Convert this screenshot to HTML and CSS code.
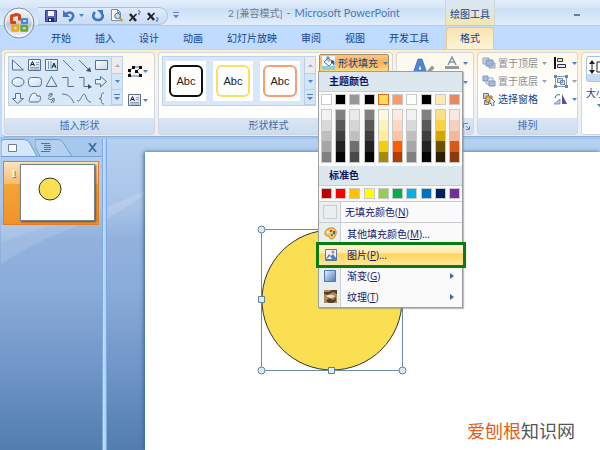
FILE: index.html
```html
<!DOCTYPE html>
<html lang="zh-CN">
<head>
<meta charset="utf-8">
<title>2 [兼容模式] - Microsoft PowerPoint</title>
<link rel="stylesheet" href="styles.css">
</head>
<body>
<svg class="defs" aria-hidden="true">
  <defs>
    <linearGradient id="orb" x1="0" y1="0" x2="0" y2="1"><stop offset="0" stop-color="#fdfdfe"/><stop offset=".45" stop-color="#d3d9e4"/><stop offset=".55" stop-color="#bcc5d5"/><stop offset="1" stop-color="#f8faff"/></linearGradient>
    <linearGradient id="glass" x1="0" y1="0" x2="1" y2="1"><stop offset="0" stop-color="#fff"/><stop offset="1" stop-color="#c5d9f0"/></linearGradient>
    <linearGradient id="blue" x1="0" y1="0" x2="1" y2="1"><stop offset="0" stop-color="#e8f3ff"/><stop offset="1" stop-color="#4a7bbb"/></linearGradient>
    <symbol id="caret" viewBox="0 0 5 3"><path d="M0 0h5L2.500 3z"/></symbol>
    <symbol id="more" viewBox="0 0 6 6"><path d="M0 0h6v1H0zM0 3h6L3 6z"/></symbol>
    <symbol id="textbox" viewBox="0 0 13 12"><path d="M.5.5h12v11H.5z" fill="url(#glass)" stroke="#5d7186"/><path d="M2.500 7 4.500 2.500 6.500 7M3 5.500h3" fill="none" stroke="#222"/><path d="M8 3.500h3M8 5.500h3M2 8.500h9M2 10h9" stroke="#7793b3" stroke-width=".8"/></symbol>
  </defs>
</svg>

<header class="chrome">
  <button class="office" aria-label="Office 按钮">
    <svg viewBox="0 0 32 32"><circle cx="16" cy="16" r="15" fill="url(#orb)" stroke="#7d8ca5"/><circle cx="16" cy="16" r="13.500" fill="none" stroke="#fff" opacity=".7"/>
      <g fill="none" stroke-linejoin="round"><path d="M13 15.500H8.500V9l5-1.500 3 1v5" stroke="#db4312" stroke-width="3"/><path d="M19 12h5v4h-5z" stroke="#3b91d3" stroke-width="2.200"/><path d="M9.500 18.500h5.500v5H9.500z" stroke="#f0a51c" stroke-width="2.600"/><path d="M18.500 19h5.500v4.500h-5.500z" stroke="#65a833" stroke-width="2.400"/></g></svg>
  </button>
  <div class="titlebar">
    <div class="qat">
      <button aria-label="保存"><svg width="12" height="12" viewBox="0 0 12 12"><path d="M.5.5h11v11H.5z" fill="#5f63c4" stroke="#33388d"/><path d="M3 1h6v5H3z" fill="#eef4ff"/><path d="M3 8h6v4H3z" fill="#222a5c"/><path d="M4 9h2v2H4z" fill="#fff"/></svg></button>
      <button aria-label="撤销"><svg width="12" height="12" viewBox="0 0 12 12"><path d="M3 4c4-3 8-1 7 3-.5 2-2 3-4 4" fill="none" stroke="#4276c5" stroke-width="2.600"/><path d="M0 0v7h7z" fill="#4276c5"/></svg></button>
      <button class="undo-list" aria-label="撤销列表"><svg class="caret"><use href="#caret"/></svg></button>
      <button aria-label="重复"><svg width="12" height="12" viewBox="0 0 12 12"><path d="M3 2c-3 3-2 8 3 8s6-5 3-7" fill="none" stroke="#4276c5" stroke-width="2.600"/><path d="M5 0h6v6z" fill="#4276c5"/></svg></button>
      <button aria-label="打印预览"><svg width="13" height="13" viewBox="0 0 13 13"><path d="M1.500.5h6l3 3v8h-9z" fill="#fff" stroke="#7890ad"/><path d="M7.500.5v3h3" fill="none" stroke="#7890ad"/><circle cx="7.500" cy="7" r="2.800" fill="#bfe0f5" stroke="#66727e"/><path d="m9.500 9 3 3" stroke="#d9962f" stroke-width="2"/></svg></button>
      <button aria-label="上标"><svg width="12" height="12" viewBox="0 0 12 12"><path d="m1 4 6 7" stroke="#222" stroke-width="2.500"/><path d="m7.500 4-7 7" stroke="#222" stroke-width="1.600"/><path d="M9 1h2v1.500L9 4h2" fill="none" stroke="#3e73bd"/></svg></button>
      <button aria-label="下标"><svg width="12" height="12" viewBox="0 0 12 12"><path d="m1 3 6 7" stroke="#222" stroke-width="2.500"/><path d="m7.500 3-7 7" stroke="#222" stroke-width="1.600"/><path d="M9 8h2v1.500L9 11h2" fill="none" stroke="#3e73bd"/></svg></button>
    </div>
    <button class="customize" aria-label="自定义快速访问工具栏"><svg class="more"><use href="#more"/></svg></button>
    <h1 class="title"><span class="doc">2 [兼容模式]</span><span>-</span><span>Microsoft PowerPoint</span></h1>
    <div class="context">绘图工具</div>
    <button class="minimize" aria-label="最小化"><span></span></button>
  </div>
  <nav class="tabs">
    <button>开始</button><button>插入</button><button>设计</button><button>动画</button><button>幻灯片放映</button><button>审阅</button><button>视图</button><button>开发工具</button><button class="active">格式</button>
  </nav>
</header>

<section class="ribbon">
  <div class="group shapes">
    <div class="content">
      <div class="gallery">
        <svg class="shape-grid" width="102" height="49" viewBox="0 0 102 49" fill="url(#glass)" stroke="#55718f" stroke-width="1">
          <path d="M3.500 3v10h11z"/>
          <use href="#textbox" x="19" y="2" width="13" height="12"/>
          <g><path d="M36.500 2.500h12v11h-12z"/><path d="M39.500 4v8M42 4v8" stroke="#7793b3"/><path d="m43 11 2-5 2 5M43.500 9h3" stroke="#222" fill="none"/></g>
          <path d="m54 3 11 11M70 3l10 10" fill="none"/><path d="M82 15l-5-1 4-4z" fill="#35506f" stroke="none"/>
          <path d="M86.500 3.500h12v9h-12z"/>
          <ellipse cx="9" cy="25" rx="6" ry="4.500"/><rect x="19.500" y="20.500" width="13" height="9" rx="3"/><path d="m42.500 19.500 5.500 10H37z"/>
          <path d="M53 20.500h6v9h6M70 20.500h5v9h5" fill="none"/><path d="m79 27 4 3-4 2z" fill="#35506f" stroke="none"/>
          <path d="M86.500 22.500h5v-3l6 5-6 5.500v-3h-5z"/>
          <path d="M6.500 36.500h5v5h3l-6 5-5-5h3z"/><path d="M22 38c2-3 6-2 6 1h3c2 3-1 7-4 6h-6c-2-2 0-4 1-7z"/>
          <path d="M40 37c5-2 4 2 1 3s-1 4 2 2 3 1 1 4M39 39l4-2M45 41l-3 5" fill="none"/>
          <path d="M53 37c6 0 9 3 12 9M68 43c3 4 5-6 7-6s2 8 7 8" fill="none"/><path d="M95 36c-4 0-2 4-3 5l-2 .5 2 .5c1 1-1 5 3 5" fill="none"/>
        </svg>
        <div class="scroller"><button class="off" aria-label="上一行"><svg class="caret up"><use href="#caret"/></svg></button><button aria-label="下一行"><svg class="caret"><use href="#caret"/></svg></button><button aria-label="更多形状"><svg class="more"><use href="#more"/></svg></button></div>
      </div>
      <div class="shape-tools">
        <button aria-label="编辑形状"><svg width="15" height="13" viewBox="0 0 15 13"><path d="M2 11V5l4-3h7L9 6l4 5z" fill="#fff" stroke="#4f6f95"/><path d="M0 9h3v3H0zM0 4h3v3H0zM4 1h3v3H4zM11 1h3v3h-3zM7 5h3v3H7zM11 9h3v3h-3z" fill="#111"/></svg><svg class="caret"><use href="#caret"/></svg></button>
        <button aria-label="文本框"><svg width="13" height="12"><use href="#textbox"/></svg><svg class="caret"><use href="#caret"/></svg></button>
      </div>
    </div>
    <h2>插入形状</h2>
  </div>

  <div class="group styles">
    <div class="content">
      <div class="gallery">
        <div class="cards"><button class="card"><span class="black">Abc</span></button><button class="card"><span class="yellow">Abc</span></button><button class="card"><span class="orange">Abc</span></button></div>
        <div class="scroller"><button class="off" aria-label="上一行"><svg class="caret up"><use href="#caret"/></svg></button><button aria-label="下一行"><svg class="caret"><use href="#caret"/></svg></button><button aria-label="更多样式"><svg class="more"><use href="#more"/></svg></button></div>
      </div>
      <div class="fill">
        <button class="fill-button" aria-expanded="true"><svg width="16" height="15" viewBox="0 0 16 15"><path d="M1 10h13v4H1z" fill="#8bd0d2"/><path d="M1 0h13v10H1z" fill="#eef5fb"/><path d="m3 6 4-4 5 4-4 4z" fill="#fff" stroke="#607e9f"/><path d="M6 5V1h2v5" fill="none" stroke="#607e9f"/><path d="M10 4c4 0 4 3 3 6-1-2-1-3-3-3z" fill="#315b95"/></svg>形状填充<svg class="caret"><use href="#caret"/></svg></button>
        <div class="menu">
          <h3>主题颜色</h3>
          <div class="swatches base">
            <button class="white" aria-label="白色"></button><button class="k" aria-label="黑色"></button><button class="gray" aria-label="灰色"></button><button class="k" aria-label="黑色 2"></button><button class="gold selected" aria-label="金黄"></button><button class="salmon" aria-label="橙红"></button><button class="white" aria-label="白色 2"></button><button class="k" aria-label="黑色 3"></button><button class="cream" aria-label="浅黄"></button><button class="clay" aria-label="赭色"></button>
          </div>
          <div class="swatches shades">
            <button class="s-white" aria-label="白色深浅"></button><button class="s-black" aria-label="黑色深浅"></button><button class="s-gray" aria-label="灰色深浅"></button><button class="s-black" aria-label="黑色 2 深浅"></button><button class="s-gold" aria-label="金黄深浅"></button><button class="s-salmon" aria-label="橙红深浅"></button><button class="s-white" aria-label="白色 2 深浅"></button><button class="s-black" aria-label="黑色 3 深浅"></button><button class="s-cream" aria-label="浅黄深浅"></button><button class="s-clay" aria-label="赭色深浅"></button>
          </div>
          <h3>标准色</h3>
          <div class="swatches standard">
            <button class="darkred" aria-label="深红"></button><button class="red" aria-label="红色"></button><button class="amber" aria-label="橙色"></button><button class="pure-yellow" aria-label="黄色"></button><button class="lime" aria-label="浅绿"></button><button class="green" aria-label="绿色"></button><button class="sky" aria-label="浅蓝"></button><button class="mid-blue" aria-label="蓝色"></button><button class="navy" aria-label="深蓝"></button><button class="purple" aria-label="紫色"></button>
          </div>
          <div class="items">
            <button class="item none"><span class="icon"><span class="empty"></span></span><span>无填充颜色(<u>N</u>)</span></button>
            <button class="item"><span class="icon"><svg width="13" height="13" viewBox="0 0 13 13"><path d="M6 1c4-1 7 2 6 6s-3 5-5 5-1-3-3-3-3 0-3-3 2-4 5-5z" fill="#f3c565" stroke="#c78b2c"/><circle cx="4" cy="5" r="1.200" fill="#fff"/><path d="M6 3h2v2H6z" fill="#d23b25"/><path d="M9 4h2v3H9z" fill="#365fbd"/><path d="M7 7h2v2H7z" fill="#2e9d37"/></svg></span><span>其他填充颜色(<u>M</u>)...</span></button>
            <button class="item hot"><span class="icon"><svg width="12" height="12" viewBox="0 0 12 12"><path d="M.5.5h11v11H.5z" fill="#e9f3ff" stroke="#5a78a5"/><path d="m1 10 3-5 2 2 2-2 3 4v2H1z" fill="#577db5"/><path d="m2 10 3-3 2 3z" fill="#fff"/><circle cx="8" cy="3" r="1.500" fill="#e57a44"/></svg></span><span>图片(<u>P</u>)...</span></button>
            <button class="item"><span class="icon"><svg width="12" height="12" viewBox="0 0 12 12"><path d="M.5.5h11v11H.5z" fill="url(#blue)" stroke="#5379aa"/></svg></span><span>渐变(<u>G</u>)</span><svg class="sub" width="4" height="6" viewBox="0 0 4 6"><path d="M0 0v6l4-3z"/></svg></button>
            <button class="item"><span class="icon"><svg width="13" height="13" viewBox="0 0 13 13"><path d="M0 0h13v13H0z" fill="#a98b5f"/><path d="M0 2h5l3-2h5v4L9 2 4 5 0 4zM2 11l3-3 4 2 3-3v4l-3 2H5z" fill="#51402c"/><path d="M2 6c3-2 6-1 9 0-3 3-6 2-9 0z" fill="#efdeb0"/></svg></span><span>纹理(<u>T</u>)</span><svg class="sub" width="4" height="6" viewBox="0 0 4 6"><path d="M0 0v6l4-3z"/></svg></button>
          </div>
        </div>
      </div>
    </div>
    <h2 class="with-launcher">形状样式</h2>
  </div>

  <div class="group wordart">
    <div class="content">
      <button class="quick" aria-label="快速样式"><svg width="26" height="26" viewBox="0 0 26 26"><path d="M1 23 8 3h4l7 20h-4l-2-6H7l-2 6zM8 14h4L10 8z" fill="#4b88d4" stroke="#28599c" stroke-width=".6"/><path d="m14 19 8-9 2 2-8 9z" fill="#9b9b9b" stroke="#666" stroke-width=".5"/></svg></button>
      <div class="stack">
        <button aria-label="文本填充"><svg width="14" height="14" viewBox="0 0 14 14"><path d="M3 9 7 1l4 8M4 6h6" fill="none" stroke="#7d93b0" stroke-width="1.500"/><path d="M0 10h14v3H0z" fill="#999"/></svg><svg class="caret"><use href="#caret"/></svg></button>
        <button aria-label="文本轮廓"><svg width="14" height="14" viewBox="0 0 14 14"><path d="M3 9 7 1l4 8M4 6h6" fill="none" stroke="#7d93b0"/></svg><svg class="caret"><use href="#caret"/></svg></button>
      </div>
    </div>
    <h2><button class="launcher" aria-label="设置文本效果格式"><svg width="7" height="7" viewBox="0 0 7 7"><path d="M.5 5V.5H5M3 3l3 3M6.500 3v3.500H3" fill="none" stroke="#5f87b9"/></svg></button></h2>
  </div>

  <div class="group arrange">
    <div class="content">
      <button disabled><svg width="14" height="12" viewBox="0 0 14 12"><path d="M1 1h6v6H1zM7 6h6v5H7z" fill="#cbd9ea" stroke="#8ba2bf"/><path d="M4 3h7v6H4z" fill="#9cb7d8" stroke="#7e98b8"/></svg>置于顶层<svg class="caret"><use href="#caret"/></svg></button>
      <button aria-label="对齐"><svg width="14" height="12" viewBox="0 0 14 12"><path d="M1 0v12" stroke="#111" stroke-width="2"/><path d="M3.500 1.500h5v3h-5zM3.500 7.500h8v3h-8z" fill="#dceafa" stroke="#333"/></svg><svg class="caret"><use href="#caret"/></svg></button>
      <button disabled><svg width="14" height="12" viewBox="0 0 14 12"><path d="M4 3h7v6H4z" fill="#e2eaf4" stroke="#9db1c9"/><path d="M1 1h5v5H1zM7 6h6v5H7z" fill="#a5bddb" stroke="#7e98b8"/></svg>置于底层<svg class="caret"><use href="#caret"/></svg></button>
      <button disabled aria-label="组合"><svg width="14" height="13" viewBox="0 0 14 13"><path d="M1.500 1.500h11v10h-11z" fill="none" stroke="#8299b4"/><path d="M3.500 3.500h5v4h-5zM6.500 5.500h4v4h-4z" fill="#dbe6f3" stroke="#6d87a8"/><path d="M0 0h3v3H0zM11 0h3v3h-3zM0 10h3v3H0zM11 10h3v3h-3z" fill="#6d87a8"/></svg><svg class="caret"><use href="#caret"/></svg></button>
      <button><svg width="14" height="13" viewBox="0 0 14 13"><path d="M1.500.5h5v5h-5zM2.500 7.500h4v4h-4z" fill="#ccd4dd" stroke="#6b7683"/><path d="M4 3h6v6H4z" fill="#f0bd4f" stroke="#9b7432"/><path d="m8 4 5 5-2 .500 1 3-2 .500-1-3-1 1z" fill="#fff" stroke="#445f83" stroke-width=".8"/></svg>选择窗格</button>
      <button aria-label="旋转"><svg width="14" height="12" viewBox="0 0 14 12"><path d="M8 1v10h5z" fill="#5f4ba5"/><path d="M6 6v5H0z" fill="#b9c9dc" stroke="#68819e" stroke-width=".7"/><path d="M1 5c1-3 3-4 5-3" fill="none" stroke="#444"/></svg><svg class="caret"><use href="#caret"/></svg></button>
    </div>
    <h2>排列</h2>
  </div>

  <div class="group size">
    <div class="content">
      <button><span class="size-icon"><svg width="20" height="16" viewBox="0 0 20 16"><path d="M4 3v10M9 3h9v10H9z" fill="#fff" stroke="#222"/><path d="M1 5l3-4 3 4zM1 11l3 4 3-4z" fill="#222"/></svg></span><span>大小</span><svg class="caret"><use href="#caret"/></svg></button>
    </div>
  </div>
</section>

<main class="workspace">
  <aside class="outline">
    <div class="pane-tabs">
      <button class="pane-tab current" aria-label="幻灯片"><svg width="36" height="18" viewBox="0 0 36 18"><path d="M0 17.500V3Q0 .5 3 .5h20q4 0 6 4l7 13z" fill="#d6e7fa" stroke="#6f9dd1"/><path d="M7.500 5.500h8v7h-8z" fill="#fff" stroke="#6e7c8c"/></svg></button>
      <button class="pane-tab" aria-label="大纲"><svg width="38" height="18" viewBox="0 0 38 18"><path d="M0 .5h23q3 0 5 3l9 14H5L0 8z" fill="#b3d0f0" stroke="#6f9dd1"/><path d="M6 4.500h9M9 6.500h7M9 8.500h7M9 10.500h7M6 12.500h9" stroke="#666d77"/></svg></button>
      <button class="close" aria-label="关闭"><svg width="9" height="9" viewBox="0 0 9 9"><path d="m1 0 7 9M8 0 1 9" stroke="#3d6e9f" stroke-width="1.800"/></svg></button>
    </div>
    <button class="thumb"><span class="number">1</span><span class="preview"><svg width="24" height="24" viewBox="0 0 24 24"><circle cx="12" cy="12" r="11" fill="#fbdf52" stroke="#333"/></svg></span></button>
    <svg class="swoosh" viewBox="0 0 100 50" preserveAspectRatio="none"><path d="M0 20Q30 6 52 0h26Q30 20 0 44z" fill="#fff" opacity=".12"/><path d="M0 0h52Q30 6 0 20z" fill="#fff" opacity=".2"/></svg>
  </aside>
  <div class="splitter"></div>
  <section class="stage">
    <svg class="ray" viewBox="0 0 38 30" preserveAspectRatio="none"><path d="M0 16 38 0v4L0 28z" fill="#fff" opacity=".14"/></svg>
    <div class="slide">
      <svg class="drawing" width="150" height="150" viewBox="0 0 150 150"><circle cx="75" cy="75" r="70" fill="#fbdf52" stroke="#333"/><path d="M4.500 4.500h141v141H4.500z" fill="none" stroke="#668bad"/><g fill="#d9f0f5" stroke="#62809b"><circle cx="4.500" cy="4.500" r="3.500"/><circle cx="145.500" cy="4.500" r="3.500"/><circle cx="4.500" cy="145.500" r="3.500"/><circle cx="145.500" cy="145.500" r="3.500"/><path d="M1.500 71.500h6v6h-6zM71.500 142.500h6v6h-6z"/></g></svg>
      <p class="site"><span>爱刨根</span>知识网</p>
    </div>
  </section>
</main>
</body>
</html>
```
FILE: styles.css
```css
* { box-sizing: border-box; }
body {
  margin: 0;
  min-height: 100vh;
  display: flex;
  flex-direction: column;
  overflow: hidden;
  background: #bfdbff;
  color: #15428b;
  font: 10px/14px "Open Sans", "Noto Sans CJK SC", sans-serif;
}
button {
  margin: 0;
  padding: 0;
  border: 0;
  background: none;
  color: inherit;
  font: inherit;
  white-space: nowrap;
}
svg { display: block; flex: none; }
h1, h2, h3, p { margin: 0; font-weight: 400; }
.defs { position: absolute; width: 0; height: 0; }
.caret { width: 5px; height: 3px; fill: #4f81bd; }
.caret.up { transform: rotate(180deg); }
.more { width: 6px; height: 6px; fill: #4f81bd; }

.chrome { position: relative; }
.office { position: absolute; left: 3px; top: 7px; width: 32px; height: 32px; }
.titlebar {
  display: grid;
  grid-template-columns: 130px 60px 217px 50px 1fr;
  align-items: center;
  height: 26px;
  padding-left: 38px;
  background: linear-gradient(#e3eefb 0, #d6e6f9 30%, #cbdff7 35%, #e0edfc 100%);
  border-bottom: 1px solid #b2cdf0;
}
.qat {
  display: flex;
  align-items: center;
  gap: 6px;
  height: 18px;
  margin-top: 6px;
  padding-left: 7px;
  border: 1px solid #a9c2e2;
  border-left: 0;
  border-radius: 0 9px 9px 0;
  background: linear-gradient(#dfebfa, #c8dcf4);
}
.undo-list { margin: 0 2px 0 -2px; }
.customize { padding: 5px; margin-top: 4px; }
.title { display: flex; gap: 4px; font: 11px/16px Lato, "Noto Sans CJK SC", sans-serif; color: #4a7ab5; white-space: nowrap; }
.doc { color: #737b87; font-size: 10px; }
.context {
  align-self: stretch;
  padding-top: 7px;
  text-align: center;
  border: solid #cfd5cf;
  border-width: 0 1px;
  background: linear-gradient(#d9e7f6, #e0e6df 50%, #f5e7a8);
}
.minimize { justify-self: start; padding: 9px; margin: 4px 0 0 70px; }
.minimize span { display: block; width: 6px; height: 2px; background: #6c7b8e; }
.tabs { display: flex; height: 23px; padding-left: 39px; }
.tabs button { padding: 0 12px; }
.tabs .active {
  margin: 1px 0 0 5px;
  padding: 0 13px 2px;
  border: 1px solid #e0c98d;
  border-bottom: 0;
  border-radius: 3px 3px 0 0;
  background: linear-gradient(#fbe3ae, #fef3d9);
}

.ribbon {
  position: relative;
  z-index: 2;
  display: flex;
  gap: 3px;
  height: 88px;
  margin-left: 2px;
  padding: 2px 0 1px 2px;
  border: solid #d8cfae;
  border-width: 1px 0 1px 0;
  border-bottom-color: #8fb0da;
  border-radius: 4px 0 0 4px;
  background: linear-gradient(#fdeecb, #fbf6e9 30%, #e8eef6);
}
.group {
  display: flex;
  flex-direction: column;
  flex: none;
  border: 1px solid #d2d7dd;
  border-radius: 3px;
  background: linear-gradient(#fdf8ec, #fff 50%);
}
.group .content { flex: 1; display: flex; padding: 3px; }
.group h2 {
  height: 16px;
  font-size: 10px;
  line-height: 15px;
  text-align: center;
  color: #3e6aaa;
  background: linear-gradient(#dbe6f5, #cddcf0);
}
.group .with-launcher { padding-right: 14px; }
.shapes { width: 151px; }
.styles { width: 235px; }
.wordart { width: 78px; }
.arrange { width: 101px; }
.size { flex: 1 0 40px; }
.gallery { display: flex; height: 50px; border: 1px solid #bdd3ec; background: #d8e8f8; }
.scroller { display: grid; grid-template-rows: 17px 16px 15px; width: 11px; }
.scroller button { display: grid; place-items: center; border: 1px solid #b7cfea; border-width: 0 0 1px 1px; background: #d5e5f8; }
.scroller .off { background: #ececec; }
.scroller .off .caret { fill: #a9adb3; }
.shape-tools { display: grid; align-content: space-between; padding: 9px 0 0 5px; height: 50px; }
.shape-tools button { display: flex; align-items: center; justify-content: space-between; width: 20px; }
.cards { display: flex; gap: 7px; padding: 4px 4px 4px 3px; }
.card { width: 40px; height: 40px; padding: 4px 3px; background: #fff; }
.card span { display: grid; place-items: center; height: 32px; border: 2px solid; border-radius: 6px; }
.card { font-family: "Liberation Sans", sans-serif; font-size: 11px; color: #222; }
.card .black { border-color: #111; }
.card .yellow { border-color: #fbdf62; }
.card .orange { border-color: #fb9d72; }
.shapes .gallery { width: 115px; }

.fill { position: relative; margin: -2px 0 0 3px; }
.fill-button {
  display: flex;
  align-items: center;
  gap: 1px;
  width: 70px;
  height: 18px;
  padding-left: 1px;
  border: 1px solid #a98b5c;
  border-radius: 2px;
  background: linear-gradient(#f7c98b, #fbb054 45%, #fdd98a);
}
.fill-button .caret { margin-left: 4px; }
.menu {
  position: absolute;
  top: 17px;
  left: -1px;
  width: 145px;
  border: 1px solid #9b9fa5;
  background: #fafafa;
  box-shadow: 1px 1px 1px #8888;
  color: #101a70;
}
.menu h3 {
  height: 20px;
  padding-left: 10px;
  border-bottom: 1px solid #c8ccd1;
  background: #dde7ee;
  font-size: 10px;
  line-height: 19px;
  font-weight: 700;
  color: #0a1268;
}
.swatches { display: flex; justify-content: space-between; padding: 2px 2px 4px; }
.swatches button { width: 11px; height: 11px; border: 1px solid #c9c9c9; }
.swatches .selected { border-color: #f06020; }
.shades { padding: 0 2px 3px; }
.shades button { height: 54px; }
.standard { padding-bottom: 2px; }
.white { background: #fff; }
.k { background: #000; }
.gray { background: #969696; }
.gold { background: #fbdf52; }
.salmon { background: #ff9966; }
.cream { background: #fdeab0; }
.clay { background: #e68a5c; }
.darkred { background: #c00000; }
.red { background: #f00; }
.amber { background: #ffc000; }
.pure-yellow { background: #ff0; }
.lime { background: #92d050; }
.green { background: #00b050; }
.sky { background: #00b0f0; }
.mid-blue { background: #0070c0; }
.navy { background: #002060; }
.purple { background: #7030a0; }
.s-white { background: linear-gradient(#f2f2f2 20%, #d9d9d9 20% 40%, #bfbfbf 40% 60%, #a6a6a6 60% 80%, #808080 80%); }
.s-black { background: linear-gradient(#808080 20%, #595959 20% 40%, #3f3f3f 40% 60%, #222 60% 80%, #060606 80%); }
.s-gray { background: linear-gradient(#eaeaea 20%, #d5d5d5 20% 40%, #c0c0c0 40% 60%, #707070 60% 80%, #4a4a4a 80%); }
.s-gold { background: linear-gradient(#fef9dc 20%, #fdf2ba 20% 40%, #fdec98 40% 60%, #f4cf05 60% 80%, #a68c02 80%); }
.s-salmon { background: linear-gradient(#ffeae0 20%, #ffd6c2 20% 40%, #ffc2a3 40% 60%, #ff5c00 60% 80%, #b33c00 80%); }
.s-cream { background: linear-gradient(#fbe08a 20%, #f9d046 20% 40%, #d5a400 40% 60%, #6a5100 60% 80%, #2a2000 80%); }
.s-clay { background: linear-gradient(#fae8df 20%, #f5d0be 20% 40%, #f0b89d 40% 60%, #d65a1b 60% 80%, #8f3a0d 80%); }
.items { border-top: 1px solid #c8ccd1; background: linear-gradient(90deg, #e9eeee 21px, #c9cfd2 21px 22px, #fafafa 22px); }
.item { display: flex; align-items: center; gap: 6px; width: 100%; height: 21px; text-align: left; }
.item.none { border-bottom: 1px solid #c8ccd1; gap: 4px; }
.icon { display: grid; place-items: center; width: 22px; }
.empty { width: 14px; height: 14px; border: 1px solid #c9cfd0; background: #e9eeee; }
.sub { margin: 0 8px 0 auto; fill: #4469a4; }
.item.hot {
  width: calc(100% + 7px);
  height: 26px;
  margin: -2px -4px -3px -3px;
  padding: 0 0 1px 1px;
  position: relative;
  border: 3px solid #087c10;
  background: linear-gradient(#fff6d5, #ffe9a4 40%, #ffd55a 45%, #ffe69a);
}
.item.hot .icon { width: 21px; }

.wordart .content { justify-content: flex-end; padding: 3px 5px; gap: 9px; }
.quick { align-self: start; }
.stack { display: grid; gap: 5px; align-content: start; }
.stack button { display: flex; align-items: center; gap: 4px; }
.wordart h2 { display: flex; justify-content: flex-end; align-items: center; padding-right: 3px; }
.group.arrange .content { display: grid; grid-template-columns: 72px 22px; grid-auto-rows: 18px; padding: 1px 4px; }
.arrange .content button { display: flex; align-items: center; gap: 2px; }
.arrange .content button:disabled { color: #8b8f96; }
.arrange .content button:disabled .caret { fill: #9ba3ae; }
.arrange .caret { margin-left: 2px; }
.size .content button { display: flex; flex-direction: column; align-items: flex-start; align-self: start; gap: 4px; padding-left: 1px; }
.size .caret { margin-left: 11px; }
.size-icon { width: 26px; height: 26px; padding: 2px 1px; border: 1px solid #a8c3e3; border-radius: 3px; background: linear-gradient(#fff 70%, #c6daf2 70%); }

.workspace { flex: 1; display: flex; padding-left: 1px; border-top: 2px solid #a4c4ed; background: linear-gradient(#b5d1f1, #a8c3e6 22%, #92b2de 32%, #8aacd8 48%, #6f94c7 75%, #517daf); }
.outline { width: 101px; }
.pane-tabs { display: flex; height: 18px; border-bottom: 1px solid #78a4d6; background: #a7c8ed; }
.pane-tab + .pane-tab { margin-left: -2px; }
.close { margin: 0 5px 0 auto; }
.thumb {
  display: flex;
  width: 96px;
  height: 64px;
  margin: 4px 2px 0;
  padding: 2px 3px 3px;
  border: 1px solid #eb7a20;
  background: linear-gradient(#fbe3bd, #f7bd6c 35%, #f3a43a 36%, #ee9328);
}
.number { width: 13px; padding-top: 2px; text-align: center; color: #fff; font: 700 11px/14px "Liberation Serif", serif; text-shadow: 1px 1px 1px #8d5d22; }
.preview { flex: 1; align-self: stretch; padding: 12px 17px; border: 1px solid #74808e; background: #fff; box-shadow: 1px 1px 2px #754b10; }
.swoosh { width: 100px; height: 45px; }
.splitter { flex: none; width: 5px; border: solid #7eaae4; border-width: 0 1px; background: linear-gradient(90deg, #c9e0ff, #a9cdfb); }
.stage { position: relative; flex: 1; display: flex; padding: 13px 0 0 38px; }
.ray { position: absolute; left: 0; top: 52px; width: 38px; height: 30px; }
.slide { position: relative; flex: 1; background: #fff; box-shadow: -1px 0 4px #375f91; }
.drawing { position: absolute; left: 112px; top: 73px; }
.site { position: absolute; right: 25px; bottom: 8px; font: 18px/24px "Noto Sans CJK SC", sans-serif; color: #555; }
.site span { color: #e26019; }
```
